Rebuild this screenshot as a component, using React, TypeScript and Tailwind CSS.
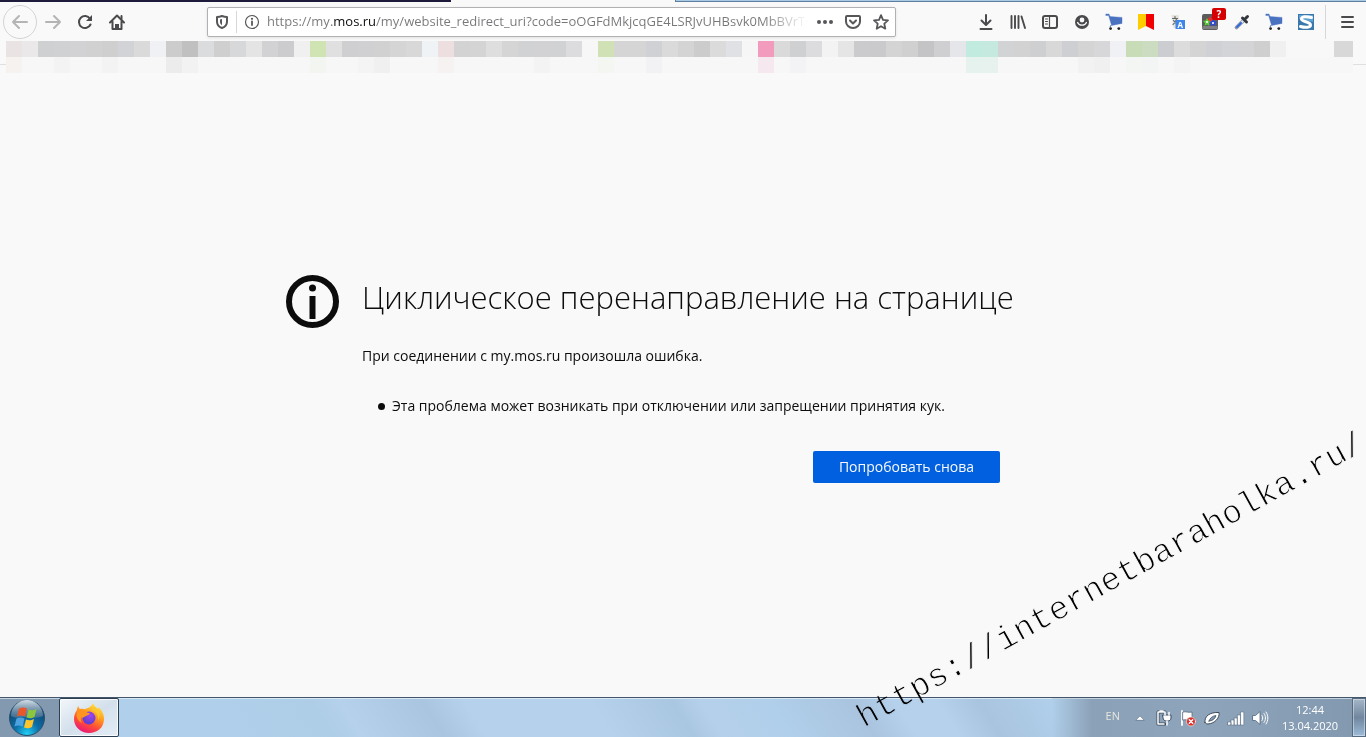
import type { ReactNode } from 'react';
import clsx from 'clsx';

/** Colours of the blurred-out bookmarks, one per 16px tile. */
const BOOKMARK_TILES = (
  'e9e3e3 eae8e9 cfd0d2 d0d1d2 d2d2d4 d1d1d1 cfcfcf d2d3d6 dadada f0f1f4 ' +
  'cccccc c0c0c0 dadcde cfcfcf d6d8da e4e4e4 d2d2d4 cccccf f0f0f0 cfe3b3 ' +
  'e0e0e0 cfcfd1 d0d0d2 d1d1d1 d5d5d6 d8d8d8 f0f3f6 eddfdf d3d3d3 d4d4d4 ' +
  'dedede d5d5d5 d1d2d4 d2d2d4 d1d2d4 dcdcdf f7f7f7 d0e2b5 d5d5d5 d5d5d5 ' +
  'd0d1d5 dadada d4d4d4 cccccc dbdbdb e0e1e4 f6f6f6 f29bbd dadada ced0d2 ' +
  'dcdcde f3f3f3 e5e5e5 cbcbcd cacacd d4d4d4 d0d0d0 c4c4c6 cfcfd2 e5e6ea ' +
  'c2ebdf c5e9df d2d3d5 d2d2d2 cecfd1 d8d8d8 cecfd3 d4d4d4 d7d7d9 f0f1f5 ' +
  'c8ddb7 cbdcc0 cccdd0 dcdcdc d4d4d4 d0d1d4 d3d4d8 d4d4d7 cfcfcf f0f0f0 ' +
  'f8f8f8 f8f8f8 f8f8f8 d8d8d8'
).split(' ');

/** Faint tiles under the bookmarks, keyed by tile index. */
const SHADOW_TILES: Record<number, string> = {
  0: 'f5f2f0', 3: 'f3f3f3', 6: 'f3f3f3', 10: 'ececec', 11: 'f2f2f2', 19: 'f3f5f1',
  22: 'f4f4f4', 23: 'f0f0f0', 27: 'f5f2f1', 33: 'f3f3f3', 37: 'f4f6f2', 40: 'f2f2f5',
  47: 'f5e8ef', 49: 'f3f3f5', 60: 'e5f2ee', 61: 'e7f1ee', 67: 'f2f2f2', 68: 'f0f0f0',
  70: 'f4f6f3', 71: 'f2f5f3', 73: 'f4f4f4',
};

const PAGE_URL =
  'https://my.mos.ru/my/website_redirect_uri?code=oOGFdMkjcqGE4LSRJvUHBsvk0MbBVrTq';

function Icon({ children, className }: { children: ReactNode; className?: string }) {
  return (
    <svg
      viewBox="0 0 16 16"
      aria-hidden="true"
      className={clsx('size-4 shrink-0 overflow-visible', className)}
      fill="none"
      stroke="currentColor"
      strokeWidth="2"
      strokeLinecap="round"
      strokeLinejoin="round"
    >
      {children}
    </svg>
  );
}

function ToolButton({
  label,
  children,
  className = 'w-8',
}: {
  label: string;
  children: ReactNode;
  className?: string;
}) {
  return (
    <button
      type="button"
      title={label}
      aria-label={label}
      className={clsx('flex h-8 shrink-0 items-center justify-center', className)}
    >
      {children}
    </button>
  );
}

function CartIcon() {
  return (
    <Icon>
      <path d="M0 0h3l1 2.600L16 3.400v6L5.600 11.400 2.600 1.500H0z" fill="#4a72c0" stroke="#4a72c0" strokeWidth="0.400" />
      <path d="M5 11.300l-.8 1.400" stroke="#4a72c0" strokeWidth="1" />
      <circle cx="4.600" cy="14.600" r="1.400" fill="#222" stroke="none" />
      <circle cx="12.800" cy="14.600" r="1.400" fill="#222" stroke="none" />
    </Icon>
  );
}

function TabStrip() {
  return (
    <div className="flex h-0.5 shrink-0">
      <div className="w-[33%] bg-[#1d1a3c]" />
      <div className="w-56" />
      <div className="flex-1 border-b border-l border-[#5f7f9c] bg-[#a9cbe8]" />
    </div>
  );
}

function AddressBar() {
  return (
    <div className="flex h-[30px] min-w-0 flex-1 items-center rounded-xs border border-[#b1b1b3] bg-white text-[#57575a] shadow-[0_1px_3px_#0000001a]">
      <button type="button" aria-label="Tracking protection" className="flex w-7 shrink-0 justify-center">
        <Icon>
          <path d="M8 2c2 .8 3.600 1 5 1v4.500c0 3.500-2 5.500-5 6.500-3-1-5-3-5-6.500V3c1.400 0 3-.2 5-1z" />
          <path d="M8 5c-.8.300-1.400.400-2 .5v2.200c0 1.600.7 2.700 2 3.500z" fill="currentColor" stroke="none" />
        </Icon>
      </button>
      <div className="h-[22px] w-px shrink-0 bg-[#d7d7db]" />
      <button type="button" aria-label="Site information" className="flex w-[30px] shrink-0 justify-center">
        <Icon>
          <circle cx="8" cy="8" r="6.500" strokeWidth="1.200" />
          <path d="M8 7.500v3.500" strokeWidth="1.800" />
          <circle cx="8" cy="4.800" r="1.100" fill="currentColor" stroke="none" />
        </Icon>
      </button>
      {/* the gradient picks out the domain and fades the tail */}
      <input
        type="text"
        aria-label="Address"
        defaultValue={PAGE_URL}
        className="min-w-0 flex-1 bg-[linear-gradient(to_right,#77777a_66px,#0c0c0d_66px,#0c0c0d_109px,#77777a_109px,#77777a_calc(100%-48px),transparent_calc(100%-4px))] bg-clip-text text-[13px] text-transparent outline-none"
      />
      <ToolButton label="Page actions" className="w-7">
        <Icon>
          <g fill="currentColor" stroke="none">
            <circle cx="2" cy="8" r="2" />
            <circle cx="8" cy="8" r="2" />
            <circle cx="14" cy="8" r="2" />
          </g>
        </Icon>
      </ToolButton>
      <ToolButton label="Save to Pocket" className="w-7">
        <Icon>
          <path d="M2 2h12a1 1 0 0 1 1 1v4.500c0 3.500-3 6.500-7 6.500s-7-3-7-6.500V3a1 1 0 0 1 1-1z" />
          <path d="M5 6.500l3 3 3-3" />
        </Icon>
      </ToolButton>
      <ToolButton label="Bookmark this page" className="w-7">
        <Icon>
          <path d="M8 1.200l2 4.600 5 .5-3.700 3.400 1 5L8 12.200l-4.300 2.500 1-5L1 6.300l5-.5z" strokeWidth="1.800" />
        </Icon>
      </ToolButton>
    </div>
  );
}

function Toolbar() {
  return (
    <div className="flex h-[39px] shrink-0 items-center pr-px pl-0.5 text-[#4a4a4d]">
      <ToolButton label="Back" className="w-[35px] text-[#b4b4b6]">
        <span className="flex size-[34px] shrink-0 items-center justify-center rounded-full border border-[#d4d4d7]">
          <Icon>
            <path d="M15 8H1M7 2L1 8l6 6" />
          </Icon>
        </span>
      </ToolButton>
      <ToolButton label="Forward" className="w-8 text-[#b4b4b6]">
        <Icon>
          <path d="M1 8h14M9 2l6 6-6 6" />
        </Icon>
      </ToolButton>
      <ToolButton label="Reload">
        <Icon>
          <path d="M13.500 10.500A6 6 0 1 1 13 4.700" />
          <path d="M15 1v6H9z" fill="currentColor" stroke="none" />
        </Icon>
      </ToolButton>
      <ToolButton label="Home">
        <Icon>
          <path d="M1 8.500L8 1.500l7 7M3.500 7.500V15h9V7.500" />
          <path d="M6 15v-5h4v5z" fill="currentColor" stroke="none" />
          <path d="M12.500 2v3" />
        </Icon>
      </ToolButton>
      <div className="w-[74px]" />
      <AddressBar />
      <div className="w-[74px]" />
      <ToolButton label="Downloads">
        <Icon>
          <path d="M8 1v9.500M3.500 6.500L8 11l4.500-4.500M2.500 15h11" />
        </Icon>
      </ToolButton>
      <ToolButton label="Library">
        <Icon>
          <path d="M1.500 2v12M5 2v12M8.500 2v12M11.500 2.500l3.500 11.500" strokeWidth="1.900" />
        </Icon>
      </ToolButton>
      <ToolButton label="Sidebars">
        <Icon>
          <rect x="1" y="2" width="14" height="12" rx="2" />
          <path d="M7.500 3v10" strokeWidth="1.200" />
          <path d="M3.500 5h2M3.500 7.500h2M3.500 10h2" strokeWidth="1" />
        </Icon>
      </ToolButton>
      <ToolButton label="Account">
        <Icon>
          <circle cx="8" cy="8" r="7" fill="currentColor" stroke="none" />
          <circle cx="8" cy="6" r="2.400" fill="#f9f9fa" stroke="none" />
          <path d="M3.600 8.500c1.400 3.600 7.400 3.600 8.800 0" stroke="#f9f9fa" strokeWidth="1.300" />
        </Icon>
      </ToolButton>
      <ToolButton label="Shopping">
        <CartIcon />
      </ToolButton>
      <ToolButton label="Bookmarks extension">
        <Icon>
          <path d="M0 0h8v12L0 16z" fill="#ffcc00" stroke="none" />
          <path d="M8 0h8v16l-8-4z" fill="#f00000" stroke="none" />
        </Icon>
      </ToolButton>
      <ToolButton label="Translate">
        <Icon>
          <path d="M1.500 1h7l2 13h-7z" fill="#e4e4dc" stroke="none" />
          <path d="M2.500 4.500h5M5 2.500v2M6.500 5C6 7.500 4.500 9.500 3 10.500M3.500 6.500c1 1.500 2.500 3 4 3.500" stroke="#666" strokeWidth="1.200" />
          <rect x="5.500" y="6" width="9.500" height="9" fill="#3f86e8" stroke="none" />
          <text x="10.200" y="13.500" textAnchor="middle" fontSize="8" fontWeight="700" fill="#fff" stroke="none">
            A
          </text>
        </Icon>
      </ToolButton>
      <ToolButton label="Image extension" className="relative w-8">
        <Icon>
          <rect x="0" y="0" width="16" height="16" rx="2" fill="#5c5c5c" stroke="none" />
          <path d="M1.500 13.500h13" stroke="#808080" strokeWidth="3" />
          <path d="M8 2l1.500 2.500 2.500.500-2 2 .5 2.500-2.500-1-2.500 1 .5-2.500-2-2 2.500-.5z" fill="#e33131" stroke="none" />
          <path d="M5 4l1.300 2.500 2.700.5-2 2 .5 2.800L5 10.500l-2.500 1.300.5-2.800-2-2 2.700-.5z" fill="#58d238" stroke="none" />
          <path d="M11 5l1.200 2.200 2.600.5-1.800 2 .4 2.600-2.400-1.200-2.400 1.200.4-2.600-1.800-2 2.600-.5z" fill="#2a48e8" stroke="none" />
          <circle cx="5" cy="8" r="1" fill="#fff" stroke="none" />
          <circle cx="11" cy="9" r="1" fill="#fff" stroke="none" />
        </Icon>
        <span className="absolute top-0.5 right-0 flex h-3 w-3.5 items-center justify-center rounded-xs bg-[#d70000] text-[10px] leading-none font-bold text-white">
          ?
        </span>
      </ToolButton>
      <ToolButton label="Colour picker">
        <Icon>
          <path d="M9.500 6.500L2.500 13.500" stroke="#8d949c" strokeWidth="3.800" />
          <path d="M9.500 6.500L3 13" stroke="#d9e4f2" strokeWidth="2.200" />
          <path d="M7 9L3 13" stroke="#2d62d8" strokeWidth="2" />
          <path d="M8.500 4l4 4M10.500 5.500l3-3" stroke="#33373d" strokeWidth="3" />
        </Icon>
      </ToolButton>
      <ToolButton label="Shopping list">
        <CartIcon />
      </ToolButton>
      <ToolButton label="Stylish">
        <Icon>
          <rect x="0" y="0" width="16" height="16" fill="#3a78ac" stroke="none" />
          <path d="M1 1h14v7L1 5z" fill="#5fa0d0" stroke="none" />
          <path d="M13.500 3.500C8 2 3.500 2.500 3.500 5c0 3 9 2.500 9 6 0 2.500-5 3-10 1.500" stroke="#fff" strokeWidth="3" />
        </Icon>
      </ToolButton>
      <div className="mx-[3px] h-[34px] w-px shrink-0 bg-[#d7d7db]" />
      <ToolButton label="Menu" className="mx-0.5 w-8">
        <Icon>
          <path d="M3 3h11M3 8h11M3 13h11" />
        </Icon>
      </ToolButton>
    </div>
  );
}

function BookmarksBar() {
  return (
    <div className="flex h-8 shrink-0" aria-hidden="true">
      <div className="h-6 w-1.5 shrink-0 border-b border-[#e0e0e2]" />
      <div className="flex min-w-0 flex-1 overflow-hidden">
        {BOOKMARK_TILES.map((color, i) => (
          <div key={i} className="w-4 shrink-0 last:flex-1">
            <div className="h-4" style={{ backgroundColor: `#${color}` }} />
            <div className="h-4" style={{ backgroundColor: `#${SHADOW_TILES[i] ?? 'f7f7f7'}` }} />
          </div>
        ))}
      </div>
      <div className="h-6 w-[13px] shrink-0 border-b border-[#e0e0e2]" />
    </div>
  );
}

function ErrorPage() {
  return (
    <main className="flex flex-1 items-center justify-center pb-3">
      <div className="w-full max-w-[794px] pr-[76px] text-sm leading-6">
        <div className="flex h-[53px] gap-[23px]">
          <svg viewBox="0 0 53 53" className="size-[53px] shrink-0" aria-hidden="true">
            <circle cx="26.500" cy="26.500" r="23.500" fill="none" stroke="#0c0c0d" strokeWidth="6" />
            <circle cx="26.500" cy="13" r="3.500" fill="#0c0c0d" />
            <path d="M23.500 21h6v23h-6z" fill="#0c0c0d" />
          </svg>
          <h1 className="text-[31px] leading-11 font-light whitespace-nowrap">
            Циклическое перенаправление на странице
          </h1>
        </div>
        <div className="pl-[76px]">
          <p className="mt-4">При соединении с my.mos.ru произошла ошибка.</p>
          <ul className="mt-[26px] pl-4">
            <li className="flex items-center gap-[7px] before:size-[7px] before:shrink-0 before:rounded-full before:bg-[#0c0c0d]">
              Эта проблема может возникать при отключении или запрещении принятия кук.
            </li>
          </ul>
          <div className="mt-[33px] flex justify-end pr-1">
            <button type="button" className="h-8 w-[187px] rounded-xs bg-[#0060df] text-sm text-[#f9f9fa]">
              Попробовать снова
            </button>
          </div>
        </div>
      </div>
    </main>
  );
}

function FirefoxLogo() {
  return (
    <svg viewBox="0 0 32 32" className="size-8" aria-hidden="true">
      <defs>
        <linearGradient id="fox" x1="0.800" y1="0" x2="0.300" y2="1">
          <stop offset="0" stopColor="#fff04a" />
          <stop offset="0.400" stopColor="#ff9a1f" />
          <stop offset="0.700" stopColor="#ff4a3a" />
          <stop offset="1" stopColor="#e8157a" />
        </linearGradient>
        <radialGradient id="globe" cx="0.600" cy="0.300" r="0.800">
          <stop offset="0" stopColor="#a044f0" />
          <stop offset="1" stopColor="#4f3fc8" />
        </radialGradient>
      </defs>
      <path
        d="M20 1c1 3 3 4 5 6 .5-1 .5-1.500.5-2 4 4 6 8 5.500 13-.6 8-7 13-15 13S1 25 1 17c0-4 1-6 3-9 0-1.500.5-3 1.500-4 0 1.500.7 2.500 1.500 3 1.500-.3 3-.2 4 .2C13 6.500 18 6 20 1z"
        fill="url(#fox)"
      />
      <circle cx="16" cy="16" r="6.500" fill="url(#globe)" />
      <path d="M5 8c4-1.500 7 0 9 2.500 1.500.3 2.500.5 3 1-1 1.500-2.500 1.700-4 2.500-1.500 1-3 2-4.500 1.500-1 1.500-.5 4 .5 5.500C4 19 2 13 5 8z" fill="#ff9420" />
      <path d="M18 8c5 1 8 5 7 10 3-4 2-9-2-12-2-1-4 0-5 2z" fill="#ffc62e" />
    </svg>
  );
}

function StartOrb() {
  return (
    <svg viewBox="0 0 38 38" className="size-[38px]" aria-hidden="true">
      <defs>
        <radialGradient id="orb" cx="0.500" cy="0.950" r="0.900">
          <stop offset="0" stopColor="#1fd0f5" />
          <stop offset="0.400" stopColor="#0d6ea8" />
          <stop offset="1" stopColor="#123a5c" />
        </radialGradient>
        <linearGradient id="gloss" x1="0" y1="0" x2="0" y2="1">
          <stop offset="0" stopColor="#d3dfe8" />
          <stop offset="1" stopColor="#5c7f9b" stopOpacity="0.600" />
        </linearGradient>
      </defs>
      <circle cx="19" cy="19" r="17.500" fill="url(#orb)" stroke="#29506e" />
      <path d="M3 17a16 16 0 0 1 32 0c-7 3-10 1-16 1S8 20 3 17z" fill="url(#gloss)" />
      <path d="M11 9.500c3-1.500 5-1.300 8 0l-2 8c-3-1.300-5-1.500-8 0z" fill="#e8582a" />
      <path d="M20.500 10.500c3 1.300 5 1 8-.5l-2 8c-3 1.500-5 1.700-8 .5z" fill="#8cc63c" />
      <path d="M8.500 19.500c3-1.500 5-1.300 8 0l-2 8c-3-1.300-5-1.500-8 0z" fill="#4da3e0" />
      <path d="M18 20.500c3 1.300 5 1 8-.5l-2 8c-3 1.500-5 1.700-8 .5z" fill="#fcc52c" />
    </svg>
  );
}

function TrayIcons() {
  return (
    <div className="flex items-center gap-2 text-white">
      <Icon>
        <path d="M4 10l4-4 4 4z" fill="currentColor" stroke="#53677c" strokeWidth="0.500" />
      </Icon>
      <Icon>
        <path d="M9 2H2v12h7" stroke="#3c4d5e" strokeWidth="3" />
        <path d="M9 2H2v12h6M4 1h3" strokeWidth="1.500" />
        <path d="M7 5h8v3c0 2-1.500 3-4 3S7 10 7 8z" fill="#fff" stroke="#3c4d5e" strokeWidth="1" />
        <path d="M9 2.500V5M13 2.500V5M11 11v4" strokeWidth="1.500" />
      </Icon>
      <Icon>
        <path d="M2 1v14" strokeWidth="1.800" />
        <path d="M3 2c3-1 5 1 9 0v8c-4 1-6-1-9 0z" fill="#fff" stroke="#53677c" strokeWidth="0.800" />
        <circle cx="11" cy="11.500" r="4.500" fill="#d8302a" stroke="#fff" strokeWidth="0.600" />
        <path d="M9.300 9.800l3.400 3.400M12.700 9.800l-3.400 3.400" strokeWidth="1.500" />
      </Icon>
      <Icon>
        <path d="M1 12.500C0 6 6 2 15 2.500c1 5-4 11-11 11.500-1.500 0-2.500-.5-3-1.500z" fill="#fff" stroke="#3c4d5e" strokeWidth="1" />
        <path d="M5 11c1-3 3.500-5 7-5.500-1 3.500-3.500 5.500-7 5.500z" fill="#8599ad" stroke="#3c4d5e" strokeWidth="0.800" />
      </Icon>
      <Icon>
        <g fill="#fff" stroke="#53677c" strokeWidth="0.500">
          <path d="M0 12h3v3H0zM3.200 10h3v5h-3zM6.400 8h3v7h-3zM9.600 5h3v10h-3zM12.800 2h3v13h-3z" />
        </g>
      </Icon>
      <Icon>
        <path d="M1 5.500h2.500L8 1.500v13l-4.500-4H1z" fill="#fff" stroke="#53677c" strokeWidth="0.800" />
        <path d="M10 5.500c1 1.500 1 3.500 0 5M12 3.500c2 2.500 2 6.500 0 9M14 2c2.500 3.500 2.500 8.500 0 12" strokeWidth="1" />
      </Icon>
    </div>
  );
}

function Taskbar() {
  return (
    <footer className="flex h-10 shrink-0 border-t border-[#44566a] bg-[linear-gradient(58deg,#b0cfea_17%,#aecde7_24%,#b5d1ec_26%,#aac5e0_32%,#b5d1ec_35%,#b5d1ec_44%,#aac7e2_50%,#b5d0eb_52%,#b0cfea_57%,#aac4df_63%,#b5d1ec_66%,#b5d1ec_69%,#a9c4df_72%,#b0cfea_77%)]">
      <button
        type="button"
        aria-label="Start"
        className="flex w-[59px] items-center border-t border-[#c4d3e2] bg-[#8399b0] pl-2"
      >
        <StartOrb />
      </button>
      <button
        type="button"
        aria-label="Firefox"
        className="flex w-[60px] items-center justify-center rounded-xs border border-[#2d3f52] bg-linear-to-br from-[#f2f6fa] via-[#d3e0ec] to-[#e4edf6] shadow-[inset_0_0_0_1px_#ffffffcc]"
      >
        <FirefoxLogo />
      </button>
      <div className="flex-1 border-t border-[#d8e8f6]" />
      <div className="flex items-center border-t border-[#c4d3e2] bg-[linear-gradient(to_right,transparent,#8ba1b8_40px,#8ea4bb_50%,#8399b0)] pl-[54px] text-[11px] text-white">
        <span className="pb-1 text-[#e6e6dc]">EN</span>
        <div className="w-3" />
        <TrayIcons />
        <time className="w-[84px] text-center leading-4">
          12:44
          <br />
          13.04.2020
        </time>
      </div>
      <button
        type="button"
        aria-label="Show desktop"
        className="w-3.5 border border-[#566a80] bg-linear-to-b from-[#a5b6c8] via-[#71879f] to-[#9dbbd8] shadow-[inset_0_0_0_1px_#ffffff66]"
      />
    </footer>
  );
}

export default function App() {
  return (
    <div className="relative flex min-h-screen flex-col overflow-hidden bg-[#f9f9fa] font-['Open_Sans','Noto_Sans',sans-serif] text-[#0c0c0d]">
      <TabStrip />
      <Toolbar />
      <BookmarksBar />
      <ErrorPage />
      <Taskbar />
      {/* the pale outline thins the strokes, multiply hides it over the taskbar */}
      <div className="pointer-events-none absolute -right-[76px] bottom-0.5 origin-bottom-left -rotate-[29deg] font-['Liberation_Mono',monospace] text-[33px] leading-none whitespace-nowrap text-black mix-blend-multiply [-webkit-text-stroke:1px_#fff]">
        https://internetbaraholka.ru/
      </div>
    </div>
  );
}
